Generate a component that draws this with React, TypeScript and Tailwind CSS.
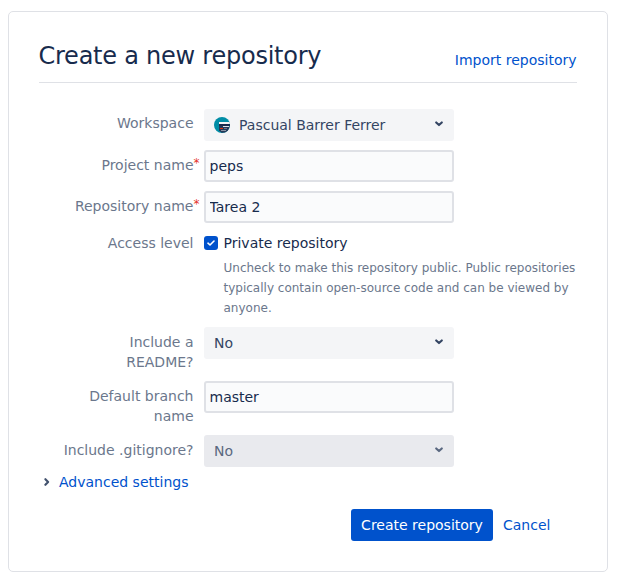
import type { ReactNode } from "react";

function Chevron({ className = "" }: { className?: string }) {
  return (
    <svg className={className} width="8" height="6" viewBox="0 0 8 6" fill="none" stroke="currentColor" strokeWidth="2.100" strokeLinecap="round" strokeLinejoin="round">
      <path d="M1.200 1.400 4 4.100 6.800 1.400" />
    </svg>
  );
}

function Avatar() {
  return (
    <svg width="16" height="16" viewBox="0 0 16 16" className="mr-[9px] shrink-0">
      <clipPath id="avatar-circle">
        <circle cx="8" cy="8" r="8" />
      </clipPath>
      <g clipPath="url(#avatar-circle)">
        <rect width="16" height="16" fill="#008da6" />
        <path d="M5 5h11v2H5z" fill="#f4f5f7" />
        <path d="M5 7h11v2H5z" fill="#172b4d" />
        <path d="M5 9h10.500v4.200l-2.500 2.500H7.500L5 13.200z" fill="#253858" />
        <path d="M9 9H15v1H9z" fill="#dfe1e6" />
        <path d="M6 11h3v1H6z" fill="#de350b" />
        <path d="M10 11h3v1h-3z" fill="#6b778c" />
        <path d="M7 13h5v1H7z" fill="#8993a4" />
      </g>
    </svg>
  );
}

function Row({ label, required, className = "", labelClassName = "pt-[5px]", children }: { label: string; required?: boolean; className?: string; labelClassName?: string; children: ReactNode }) {
  return (
    <div className={`flex items-start ${className}`}>
      <div className={`relative mr-[10.5px] ml-[14.5px] w-[140px] shrink-0 text-right text-[#6b778c] ${labelClassName}`}>
        {label}
        {required && <span className="absolute top-[3px] left-full text-[12px] text-[#e5342a]">*</span>}
      </div>
      {children}
    </div>
  );
}

function Select({ value, icon, disabled }: { value: string; icon?: ReactNode; disabled?: boolean }) {
  return (
    <button
      type="button"
      disabled={disabled}
      className={`flex h-8 w-[250px] items-center rounded-[3px] pr-[11px] pl-[10px] text-left ${
        disabled ? "bg-[#e9eaee] text-[#5a6880]" : "bg-[#f4f5f7] text-[#344563]"
      }`}
    >
      {icon}
      <span className="flex-1">{value}</span>
      <Chevron className="mb-[3px]" />
    </button>
  );
}

function TextField({ value }: { value: string }) {
  return (
    <input
      type="text"
      defaultValue={value}
      className="h-8 w-[250px] rounded-[3px] border-2 border-[#dfe1e6] bg-[#fafbfc] pr-1 pl-[3.5px] text-[#172b4d] outline-none"
    />
  );
}

export default function App() {
  return (
    <div className="h-[583px] bg-white pt-[11px] pl-2 font-['DejaVu_Sans',sans-serif] text-[14px] leading-5 text-[#172b4d]">
      <main className="h-[561px] w-[600px] rounded-[5px] border border-[#dfe1e6] px-[30px] pt-[29px]">
        <header className="flex h-[42px] items-start justify-between border-b border-[#dfe1e6]">
          <h1 className="-ml-[0.5px] pt-px text-[24px] leading-[28px] tracking-[-0.24px]">Create a new repository</h1>
          <a className="pt-[9px] pr-[0.5px] text-[#0052cc]">Import repository</a>
        </header>

        <form className="pt-[26px]">
          <Row label="Workspace" className="h-[41px]" labelClassName="pt-1">
            <Select value="Pascual Barrer Ferrer" icon={<Avatar />} />
          </Row>
          <Row label="Project name" required className="h-[41px]">
            <TextField value="peps" />
          </Row>
          <Row label="Repository name" required className="h-[37px]">
            <TextField value="Tarea 2" />
          </Row>
          <Row label="Access level" className="h-[99px]">
            <div className="flex pt-[5px]">
              <span className="mt-[3px] mr-[5.5px] flex size-[14px] shrink-0 items-center justify-center rounded-[3px] bg-[#0052cc]">
                <svg width="8" height="6" viewBox="0 0 8 6" fill="none" stroke="white" strokeWidth="1.600" strokeLinecap="round" strokeLinejoin="round">
                  <path d="M1 3.200 3 5 7 1" />
                </svg>
              </span>
              <div>
                <div>Private repository</div>
                <p className="mt-[5px] w-[354px] text-[12px] leading-5 text-[#6b778c]">
                  Uncheck to make this repository public. Public repositories typically contain open-source code and can be viewed by anyone.
                </p>
              </div>
            </div>
          </Row>
          <Row label="Include a README?" className="h-[54px]" labelClassName="pt-[5px] pl-[10px]">
            <Select value="No" />
          </Row>
          <Row label="Default branch name" className="h-[54px]">
            <TextField value="master" />
          </Row>
          <Row label="Include .gitignore?" className="h-[37px]">
            <Select value="No" disabled />
          </Row>
          <div className="flex h-5 items-center pl-1">
            <Chevron className="mr-2 -rotate-90 text-[#42526e]" />
            <a className="text-[#0052cc]">Advanced settings</a>
          </div>
          <div className="flex items-center pt-[17px] pl-[312px]">
            <button type="button" className="h-8 w-[142px] rounded-[3px] bg-[#0052cc] text-white">
              Create repository
            </button>
            <a className="ml-[10px] text-[#0052cc]">Cancel</a>
          </div>
        </form>
      </main>
    </div>
  );
}
